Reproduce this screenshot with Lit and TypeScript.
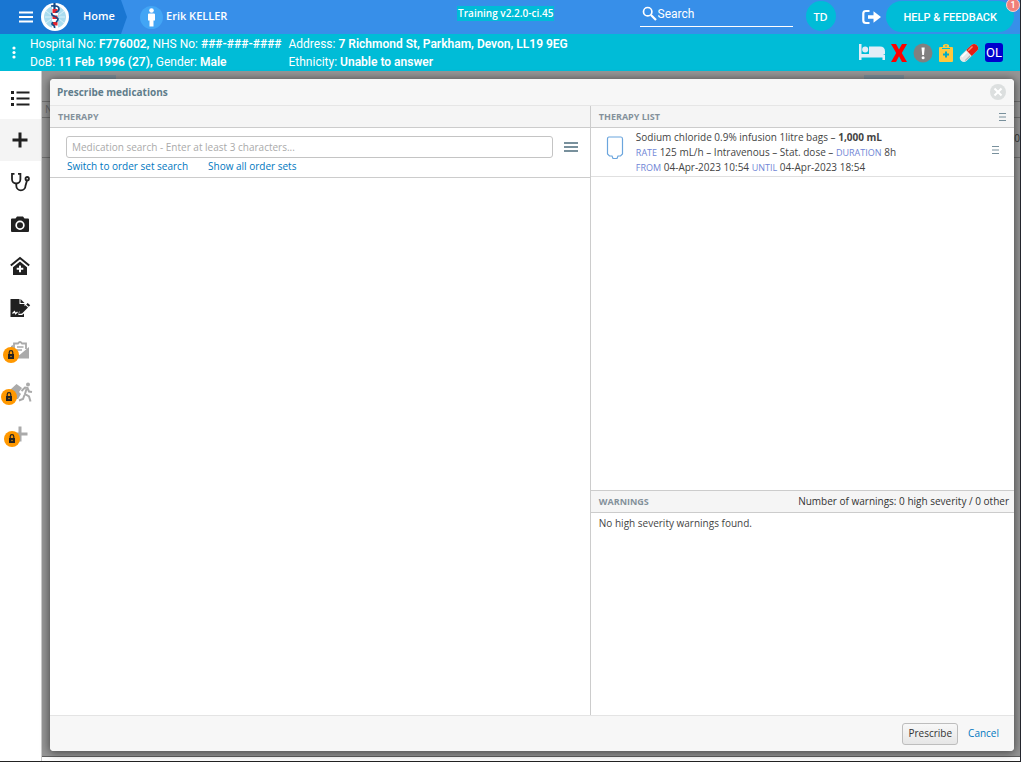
import { LitElement, html, svg, css } from "lit";
import { customElement } from "lit/decorators.js";

const icon = (cls: string, box: string, body: unknown) =>
  html`<svg class=${cls} viewBox=${box} aria-hidden="true">${body}</svg>`;

const plus = svg`<path d="M10 2.500v15M2.500 10h15" stroke="currentColor" stroke-width="3" fill="none"/>`;

const navItems: { label: string; active?: boolean; locked?: number; body: unknown }[] = [
  {
    label: "List",
    body: svg`<path fill="currentColor" d="M1 3h3v3H1zM1 9h3v3H1zM1 15h3v3H1zM6.500 3.500h13v2h-13zM6.500 9.500h13v2h-13zM6.500 15.500h13v2h-13z"/>`,
  },
  { label: "Add", active: true, body: plus },
  {
    label: "Clinical",
    body: svg`<g fill="none" stroke="currentColor" stroke-width="1.800"><path d="M4.500 1.800H2v5.500a4.200 4.200 0 0 0 8.400 0V1.800H8"/><path d="M6.300 11.500v2.200a4.600 4.600 0 0 0 9.200 0l1.500-5.200"/><circle cx="17.200" cy="6.700" r="1.700"/></g>`,
  },
  {
    label: "Camera",
    body: svg`<path fill="currentColor" fill-rule="evenodd" d="M7 2.500h6l1.500 2H18q1 0 1 1V17q0 1-1 1H2q-1 0-1-1V5.500q0-1 1-1h3.500zM10 6.500a4.700 4.700 0 1 0 0 9.400a4.700 4.700 0 0 0 0-9.400zM10 8.200a3 3 0 1 1 0 6a3 3 0 0 1 0-6z"/>`,
  },
  {
    label: "Ward",
    body: svg`<path d="M.8 9.500L10 2l9.200 7.500" fill="none" stroke="currentColor" stroke-width="2"/><path fill="currentColor" fill-rule="evenodd" d="M10 5.500l7 5.700V19H3v-7.800zM9 9.500v2.300H6.700v2H9v2.400h2v-2.400h2.300v-2H11V9.500z"/>`,
  },
  {
    label: "Sign",
    body: svg`<path fill="currentColor" d="M.5 1h9v5h5v2.500L9 13.500 8.300 17H12l2-1.500V19H.5zM10.500 1l4 4h-4zM17.700 5l2.500 2.300-1.500 1.500L16.200 6.500zM15.500 7.200l2.500 2.400-6 5.800-2.900.5.400-2.900z"/><path d="M2.500 15.500l2-2 1 2.300L7.500 14" stroke="#fff" fill="none" stroke-width="1.200"/>`,
  },
  {
    label: "Forms",
    locked: 0,
    body: svg`<path d="M4 12V3.500h4q2-3 4 0h4V9" fill="none" stroke="currentColor" stroke-width="1.800"/><path fill="currentColor" d="M1 6l2-1v7l6.500 3L19 7v11.500H1z"/><path d="M7 7h6.500M7 10h5" stroke="currentColor" stroke-width="1.500"/>`,
  },
  {
    label: "Discharge",
    locked: 1,
    body: svg`<path fill="currentColor" d="M0 8l6.500-6L12 6 9 10l2 2-3 5H2V9z"/><circle cx="18" cy="2.500" r="2" fill="currentColor"/><path d="M11.500 9l3.500-3.500 2.500.5L19 9.500l3 .5M16.500 7L15 12l4 2.500 1.500 5M14.500 13L13 17l-4 1.500" stroke="currentColor" stroke-width="2" fill="none"/>`,
  },
  { label: "More", locked: 2, body: plus },
];

@customElement("side-nav")
class SideNav extends LitElement {
  static styles = css`
    :host { display: block; flex: none; width: 42px; box-sizing: border-box; padding-top: 6px; background: #fff; border-right: 1px solid #ccc; }
    .nav { display: flex; flex-direction: column; }
    .item { position: relative; display: flex; align-items: center; justify-content: center; height: 42px; padding: 0 2px 0 0; border: 0; background: none; color: #212121; }
    .active { background: #f4f4f4; }
    .locked { color: #aaa; }
    .glyph { width: 20px; height: 20px; overflow: visible; }
    .badge { position: absolute; top: 18px; width: 16px; height: 16px; }
    .at0 { left: 3px; }
    .at1 { left: 1px; }
    .at2 { left: 4px; }
  `;
  render() {
    return html`<nav class="nav">
      ${navItems.map(
        (n) => html`<button class="item ${n.active ? "active" : ""} ${n.locked !== undefined ? "locked" : ""}" aria-label=${n.label}>
          ${icon("glyph", "0 0 20 20", n.body)}
          ${n.locked !== undefined
            ? icon(
                `badge at${n.locked}`,
                "0 0 16 16",
                svg`<circle cx="8" cy="8" r="8" fill="#ff9800"/><path d="M5 7h6v5H5z" fill="#222"/><path d="M6.200 7V5.500a1.800 1.800 0 0 1 3.600 0V7" fill="none" stroke="#222" stroke-width="1.200"/><circle cx="8" cy="9.500" r=".7" fill="#ff9800"/>`
              )
            : ""}
        </button>`
      )}
    </nav>`;
  }
}

@customElement("top-bar")
class TopBar extends LitElement {
  static styles = css`
    :host { display: flex; flex: none; height: 34px; background: #378fe9; color: #fff; font: 600 11px "Open Sans", sans-serif; }
    .home { display: flex; align-items: center; width: 127px; box-sizing: border-box; padding-left: 19px; gap: 8px; background: #1976d2; clip-path: polygon(0 0, 121px 0, 100% 50%, 121px 100%, 0 100%); }
    .burger, .out { display: flex; align-items: center; padding: 0; border: 0; background: none; color: inherit; }
    .burger svg { width: 14px; height: 12px; }
    .logo { width: 28px; height: 28px; }
    a { color: inherit; text-decoration: none; }
    .home a { margin-left: 6px; padding-bottom: 3px; }
    .person { display: flex; align-items: center; gap: 3px; margin-left: 13px; width: 240px; }
    .person span { padding-bottom: 3px; }
    .avatar { width: 23px; height: 23px; }
    .mid { flex: 1; text-align: center; padding: 5px 8px 0 0; }
    .version { background: #00bcd7; line-height: 15px; display: inline-block; padding: 0 1px; font-size: 10px; }
    .search { display: flex; align-self: flex-start; align-items: center; gap: 1px; width: 153px; height: 27px; box-sizing: border-box; border-bottom: 1px solid #fff; padding: 0 0 0 2px; }
    .search svg { width: 15px; height: 15px; flex: none; }
    .search input { min-width: 0; flex: 1; border: 0; padding: 1px 0 0; outline: 0; background: none; color: #fff; font: 12px Roboto, sans-serif; }
    .search input::placeholder { color: #fff; opacity: 1; }
    .user { display: grid; place-items: center; width: 30px; height: 30px; margin: 1px 26px 0 13px; border-radius: 50%; border: 0; padding: 0; background: #00bcd7; color: #fff; font: 600 11px "Open Sans", sans-serif; }
    .out svg { width: 19px; height: 16px; }
    .help { position: relative; height: 31px; margin: 1px 6px 0 5px; padding: 1px 17px 0 18px; border: 0; border-radius: 16px; background: #00bcd7; color: #fff; font: 500 11px Roboto, sans-serif; white-space: nowrap; }
    .count { position: absolute; top: -3px; right: -6px; width: 14px; height: 14px; box-sizing: border-box; border: 1px solid #fbd0cd; border-radius: 50%; background: #f07f7a; font-size: 9px; line-height: 12px; }
  `;
  render() {
    return html`
      <div class="home">
        <button class="burger" aria-label="Menu">${icon("", "0 0 14 12", svg`<path d="M0 1.500h14M0 6h14M0 10.500h14" stroke="#fff" stroke-width="2"/>`)}</button>
        ${icon(
          "logo",
          "0 0 28 28",
          svg`<circle cx="14" cy="14" r="14" fill="#fff"/><circle cx="14" cy="14" r="11" fill="#a9dcef"/><path d="M5 8l5 4M4 14h6M5 20l5-4M23 8l-5 4M24 14h-6M23 20l-5-4" stroke="#d9f1f9" stroke-width="1"/><path d="M14 3v22" stroke="#fff" stroke-width="6"/><path d="M11.500 6h5v4h-5zM11.500 12.500h5v3.500h-5zM12 19h4.500v3.500H12z" fill="#e3252f"/><path d="M13.500 0v6" stroke="#174a86" stroke-width="2.200"/><path d="M10 3q8-1 8 3c0 2-2 3-3.500 3.500M11 10q-1 2 2 3t4 3q0 2-2 3M12 19q-2 2 0 3t1.500 3" fill="none" stroke="#174a86" stroke-width="1.700"/>`
        )}
        <a href="#home">Home</a>
      </div>
      <div class="person">
        ${icon("avatar", "0 0 23 23", svg`<circle cx="11.500" cy="11.500" r="11.500" fill="#42a5f5"/><circle cx="11.500" cy="4.500" r="2.300" fill="#fff"/><path d="M9 7.500h5q1 0 1 1v6h-1.500v6h-4v-6H8v-6q0-1 1-1z" fill="#fff"/>`)}
        <span>Erik KELLER</span>
      </div>
      <div class="mid"><span class="version">Training v2.2.0-ci.45</span></div>
      <label class="search">
        ${icon("", "0 0 15 15", svg`<circle cx="5.700" cy="5.700" r="4.200" fill="none" stroke="#fff" stroke-width="1.700"/><path d="M9 9l5 5" stroke="#fff" stroke-width="2.200"/>`)}
        <input type="search" placeholder="Search" aria-label="Search" />
      </label>
      <button class="user">TD</button>
      <button class="out" aria-label="Sign out">${icon("", "0 0 19 16", svg`<path d="M7.500 2H4Q1.300 2 1.300 4.500v7Q1.300 14 4 14h3.500" fill="none" stroke="#fff" stroke-width="2.200"/><path d="M6 6.200h5.500V2.300L19 8l-7.500 5.700V9.800H6z" fill="#fff"/>`)}</button>
      <button class="help">HELP &amp; FEEDBACK<span class="count">1</span></button>
    `;
  }
}

@customElement("patient-bar")
class PatientBar extends LitElement {
  static styles = css`
    :host { display: flex; flex: none; align-items: center; height: 37px; background: #00bcd7; color: #fff; font: 12px/18px Roboto, sans-serif; }
    .more { display: flex; margin: 0 14px 0 12px; border: 0; padding: 0; background: none; }
    .more svg { width: 4px; height: 13px; }
    .facts { display: flex; flex: 1; gap: 7px; white-space: nowrap; }
    b { font-weight: 600; }
    .flags { display: flex; align-items: center; padding-right: 17px; gap: 6px; }
    .bed { width: 26px; height: 16px; margin-bottom: 2px; }
    .cross { width: 16px; height: 18px; }
    .alert { width: 20px; height: 20px; }
    .clip { width: 14px; height: 18px; }
    .pill { width: 20px; height: 20px; }
    .ol { width: 18px; height: 19px; border-radius: 3px; background: #0000cd; font: 13px/19px Roboto, sans-serif; text-align: center; }
  `;
  render() {
    return html`
      <button class="more" aria-label="More">${icon("", "0 0 4 13", svg`<g fill="#fff"><circle cx="2" cy="2" r="1.600"/><circle cx="2" cy="6.500" r="1.600"/><circle cx="2" cy="11" r="1.600"/></g>`)}</button>
      <div class="facts">
        <div>
          <div>Hospital No: <b>F776002,</b> NHS No: <b>###-###-####</b></div>
          <div>DoB: <b>11 Feb 1996 (27),</b> Gender: <b>Male</b></div>
        </div>
        <div>
          <div>Address: <b>7 Richmond St, Parkham, Devon, LL19 9EG</b></div>
          <div>Ethnicity: <b>Unable to answer</b></div>
        </div>
      </div>
      <div class="flags">
        ${icon("bed", "0 0 26 16", svg`<path fill="#e3edf7" d="M0 0h2.500v10H24v0l2 1v5h-2.500v-2.500h-21V16H0zM10 2.500h11q5 0 5 5V10H10z"/><circle cx="6.200" cy="5.500" r="3" fill="#e3edf7"/>`)}
        ${icon("cross", "0 0 16 18", svg`<path fill="#f00" d="M0 0h5l3 5.500L11 0h5l-5.200 9L16 18h-5l-3-5.700L5 18H0l5.200-9z"/>`)}
        ${icon("alert", "0 0 20 20", svg`<circle cx="10" cy="10" r="9.500" fill="#808080"/><path d="M8.500 4.500h3.200L11 12H9.200z" fill="#fff"/><circle cx="10.100" cy="14.700" r="1.500" fill="#fff"/>`)}
        ${icon("clip", "0 0 14 18", svg`<path fill="#ffc83d" d="M1 3h3V1q3-2 6 0v2h3q1 0 1 1v13q0 1-1 1H1q-1 0-1-1V4q0-1 1-1z"/><path d="M3 4.500h8" stroke="#00bcd7"/><circle cx="7" cy="2" r=".8" fill="#00bcd7"/><path d="M7 7.500v6M4 10.500h6" stroke="#00acc7" stroke-width="2"/>`)}
        ${icon("pill", "0 0 20 20", svg`<g transform="rotate(-44 10 10)"><rect x="-1" y="6" width="22" height="8" rx="4" fill="#e8e8e8"/><path d="M10 6h7a4 4 0 0 1 0 8h-7z" fill="#e51c12"/><path d="M2 7.800h7" stroke="#fff" stroke-width="1.500"/><path d="M11 7.800h6" stroke="#ff8a70" stroke-width="1.500"/><path d="M2 12.800h7" stroke="#b8b8b8" stroke-width="1.200"/></g>`)}
        <span class="ol">OL</span>
      </div>
    `;
  }
}

@customElement("prescribe-dialog")
class PrescribeDialog extends LitElement {
  static styles = css`
    :host { display: flex; flex-direction: column; background: #fff; border-radius: 4px; overflow: hidden; box-shadow: 0 1px 8px 1px rgba(0, 0, 0, 0.5); color: #444; font: 10px/15px "Open Sans", sans-serif; }
    .title { display: flex; align-items: center; justify-content: space-between; height: 26px; padding: 0 8px 0 7px; background: #f7f7f7; border-bottom: 1px solid #e6e6e6; color: #607d8b; }
    h1, h2 { margin: 0; font: inherit; font-weight: 700; }
    button { font: inherit; padding: 0; border: 0; background: none; display: flex; }
    .close svg { width: 16px; height: 16px; }
    .cols { display: grid; grid-template-columns: 56fr 44fr; flex: 1; min-height: 0; }
    .right { display: flex; flex-direction: column; border-left: 1px solid #ccc; }
    .head { display: flex; align-items: center; justify-content: space-between; height: 21px; padding: 0 8px; background: #f5f5f5; border-bottom: 1px solid #ccc; color: #84919b; }
    .head h2 { font-size: 9px; }
    .head p { margin: 0 -3px 0 0; color: #333; }
    .find { height: 41px; padding: 8px 10px 0 16px; border-bottom: 1px solid #ccc; }
    .field { display: flex; align-items: center; gap: 9px; }
    .field input { flex: 1; min-width: 0; height: 22px; box-sizing: border-box; border: 1px solid #c4c4c4; border-radius: 3px; padding: 0 5px; font: inherit; background: #fff; outline: 0; }
    .field input::placeholder { color: #aaa; opacity: 1; }
    .lines { width: 18px; height: 10px; }
    .links { display: flex; gap: 20px; padding: 1px 1px; }
    a { color: #0077c0; text-decoration: none; }
    .item { display: flex; align-items: center; height: 48px; padding: 0 15px; border-bottom: 1px solid #e0e0e0; }
    .item > div { flex: 1; white-space: nowrap; }
    .item button { padding-bottom: 5px; }
    .bag { width: 18px; height: 26px; flex: none; margin: 0 12px 9px 0; }
    .item b { font-weight: 700; }
    .key { color: #7086d6; font-size: 9px; }
    .mini { width: 7px; height: 8px; }
    .list { flex: 1; }
    .warn { flex: none; height: 224px; border-top: 1px solid #ccc; }
    .warn > p { margin: 3px 8px; }
    .foot { display: flex; justify-content: flex-end; align-items: center; gap: 10px; height: 35px; padding: 0 15px; background: #f7f7f7; border-top: 1px solid #e4e4e4; }
    .ok { height: 22px; box-sizing: border-box; align-items: center; padding: 0 5px; border: 1px solid #bdbdbd; border-radius: 3px; background: linear-gradient(#f8f8f8, #e6e6e6); color: #333; }
  `;
  mini = () => icon("mini", "0 0 7 8", svg`<path d="M0 .5h7M0 4h7M0 7.500h7" stroke="#78909c"/>`);
  render() {
    return html`
      <header class="title">
        <h1>Prescribe medications</h1>
        <button class="close" aria-label="Close">${icon("", "0 0 16 16", svg`<circle cx="8" cy="8" r="8" fill="#dcdfdf"/><path d="M4.500 4.500l7 7M11.500 4.500l-7 7" stroke="#fff" stroke-width="2"/>`)}</button>
      </header>
      <div class="cols">
        <section>
          <div class="head"><h2>THERAPY</h2></div>
          <div class="find">
            <div class="field">
              <input type="text" aria-label="Medication search" placeholder="Medication search - Enter at least 3 characters..." />
              <button aria-label="Options">${icon("lines", "0 0 18 10", svg`<path d="M2 1h14M2 5h14M2 9h14" stroke="#78909c" stroke-width="2"/>`)}</button>
            </div>
            <div class="links"><a href="#sets">Switch to order set search</a><a href="#all">Show all order sets</a></div>
          </div>
        </section>
        <section class="right">
          <div class="head"><h2>THERAPY LIST</h2><button aria-label="List menu">${this.mini()}</button></div>
          <div class="list">
            <div class="item">
              ${icon("bag", "0 0 18 26", svg`<path d="M3 2h12q1.500 0 1.500 2V19l-2 2H12l-1 2.500H7L6 21H3.500l-2-2V4q0-2 1.500-2z" fill="#fff" stroke="#6ba5dd" stroke-width="1.200"/>`)}
              <div>
                <div>Sodium chloride 0.9% infusion 1litre bags – <b>1,000 mL</b></div>
                <div><span class="key">RATE</span> 125 mL/h – Intravenous – Stat. dose – <span class="key">DURATION</span> 8h</div>
                <div><span class="key">FROM</span> 04-Apr-2023 10:54 <span class="key">UNTIL</span> 04-Apr-2023 18:54</div>
              </div>
              <button aria-label="Item menu">${this.mini()}</button>
            </div>
          </div>
          <div class="warn">
            <div class="head"><h2>WARNINGS</h2><p>Number of warnings: 0 high severity / 0 other</p></div>
            <p>No high severity warnings found.</p>
          </div>
        </section>
      </div>
      <footer class="foot"><button class="ok">Prescribe</button><a href="#cancel">Cancel</a></footer>
    `;
  }
}

@customElement("app-root")
class AppRoot extends LitElement {
  static styles = css`
    :host { display: flex; flex-direction: column; height: 100vh; box-sizing: border-box; border-right: 1px solid #24262e; border-bottom: 1px solid #222; background: #fff; overflow: hidden; }
    .body { display: flex; flex: 1; min-height: 0; }
    .page { position: relative; flex: 1; min-width: 0; margin-bottom: 4px; background: #969696; border-bottom: 1px solid #606060; color: #666; font: 10px/14px "Open Sans", sans-serif; }
    .tabs { display: flex; justify-content: space-between; height: 26px; box-sizing: content-box; padding: 4px 116px 0 38px; border-bottom: 1px solid #707070; }
    .tab { width: 36px; background: #7c8d99; }
    .wide { width: 40px; }
    .row { display: flex; justify-content: space-between; height: 15px; padding: 0 3px; border-bottom: 1px solid #707070; }
    .tall { height: 39px; align-items: center; justify-content: flex-end; padding: 0; color: #333; }
    prescribe-dialog { position: absolute; inset: 8px 6px 5px 8px; }
  `;
  render() {
    return html`
      <top-bar></top-bar>
      <patient-bar></patient-bar>
      <div class="body">
        <side-nav></side-nav>
        <main class="page">
          <div class="tabs"><div class="tab"></div><div class="tab wide"></div></div>
          <div class="row"><span>N</span></div>
          <div class="row tall"><span>00</span></div>
          <prescribe-dialog></prescribe-dialog>
        </main>
      </div>
    `;
  }
}
